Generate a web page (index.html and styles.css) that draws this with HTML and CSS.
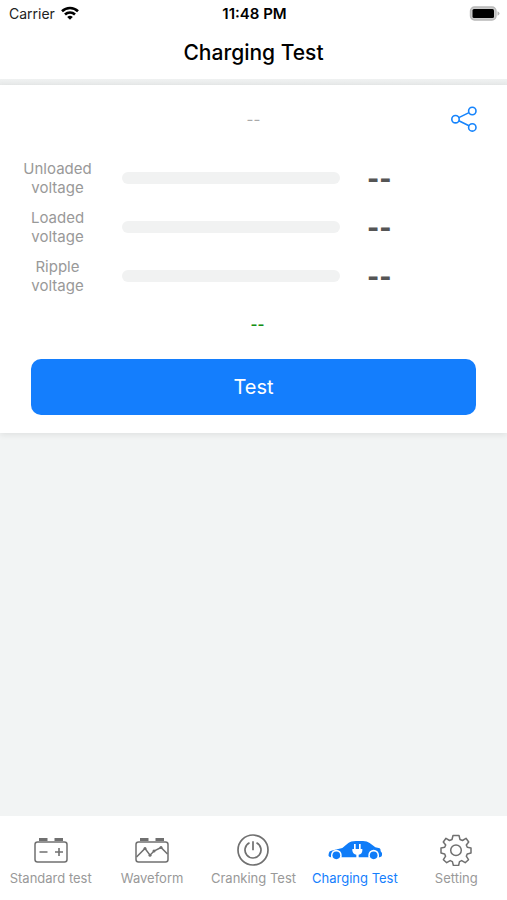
FILE: index.html
```html
<!DOCTYPE html>
<html lang="en">
<head>
<meta charset="utf-8">
<meta name="viewport" content="width=device-width, initial-scale=1">
<title>Charging Test</title>
<link rel="stylesheet" href="styles.css">
</head>
<body>
<div class="status">
  <span class="carrier">Carrier
    <svg width="18" height="14" viewBox="0 0 18 14" fill="none" stroke="#000" stroke-width="2.6" aria-hidden="true"><path d="M1 5.2a11.6 11.6 0 0 1 16 0"/><path d="M4 8.500a7.200 7.200 0 0 1 10 0"/><path d="M9 13.800L6.200 11a4 4 0 0 1 5.600 0z" fill="#000" stroke="none"/></svg>
  </span>
  <span class="time">11:48 PM</span>
  <svg class="battery" width="31" height="15" viewBox="0 0 31 15" aria-hidden="true"><rect x="1.500" y="1" width="25.500" height="13" rx="4" fill="#ccc" stroke="#b8b8b8" stroke-width="1.400"/><rect x="3.500" y="3" width="21.500" height="9" rx="1.500" fill="#000"/><path d="M28.500 5.200q2 .8 2 2.300t-2 2.300z" fill="#b4b4b4"/></svg>
</div>
<header class="title"><h1>Charging Test</h1></header>
<main>
  <section class="card">
    <div class="summary">
      <span class="date">--</span>
      <button class="share" type="button" aria-label="Share">
        <svg width="28" height="28" viewBox="0 0 28 28" fill="none" stroke="#1684fc" stroke-width="1.600"><circle cx="5.500" cy="14.200" r="3.700"/><circle cx="22.300" cy="6" r="3.700"/><circle cx="22.300" cy="22.400" r="3.700"/><path d="M8.800 12.600L19 7.600M8.800 15.800L19 20.800"/></svg>
      </button>
    </div>
    <div class="row"><span class="label">Unloaded<br>voltage</span><span class="bar"></span><span class="value">--</span></div>
    <div class="row"><span class="label">Loaded<br>voltage</span><span class="bar"></span><span class="value">--</span></div>
    <div class="row"><span class="label">Ripple<br>voltage</span><span class="bar"></span><span class="value">--</span></div>
    <p class="result">--</p>
    <button class="test" type="button">Test</button>
  </section>
</main>
<nav class="tabs">
  <a href="#standard">
    <svg width="34" height="26" viewBox="0 0 34 26" fill="none" stroke="#707070" stroke-width="1.500"><rect x="1" y="5" width="32" height="20" rx="2.500"/><path d="M5 2.500h8.500M20.500 2.500h8.500" stroke-width="2.800"/><path d="M5.500 15h8M21 15h8M25 11v8" stroke-width="1.600"/></svg>
    Standard test</a>
  <a href="#waveform">
    <svg width="34" height="26" viewBox="0 0 34 26" fill="none" stroke="#707070" stroke-width="1.500"><rect x="1" y="5" width="32" height="20" rx="2.500"/><path d="M5 2.500h8.500M20.500 2.500h8.500" stroke-width="2.800"/><path d="M1.500 20L10 11.500 15 18.200 19 14 26 10.500 32.500 17"/><g fill="#707070" stroke="none"><circle cx="10" cy="11.500" r="1.500"/><circle cx="15" cy="18.200" r="1.500"/><circle cx="19" cy="14" r="1.500"/><circle cx="26" cy="10.500" r="1.500"/></g></svg>
    Waveform</a>
  <a href="#cranking">
    <svg width="34" height="34" viewBox="0 0 34 34" fill="none" stroke="#707070" stroke-width="1.700"><circle cx="17" cy="17" r="15"/><path d="M13.500 9.800a8 8 0 1 0 7 0M17 8.200v9"/></svg>
    Cranking Test</a>
  <a class="active" href="#charging" aria-current="page">
    <svg width="54" height="20" viewBox="0 0 162 60"><path fill="#0f7cf8" d="M4 50Q0 48 2 42L3 38Q3 34 10 32Q28 27 43 24L61 9Q68 3 84 3H105Q117 3 125 9L142 22L155 25Q158 27 158 34L162 39V46Q162 51 155 52H8Z"/><path d="M9 53V45a16 16 0 0 1 32 0v8zM121 53V45a16 16 0 0 1 32 0v8z" fill="#fff"/><circle cx="25" cy="46" r="11.500" fill="#0f7cf8"/><circle cx="137" cy="46" r="11.500" fill="#0f7cf8"/><path fill="#fff" d="M78 12h5v15h10V12h5v15h5v5q-1 10-11 12v10h-7V44q-10-2-12-12v-5h5z"/></svg>
    Charging Test</a>
  <a href="#setting">
    <svg width="32" height="32" viewBox="0 0 32 32" fill="none" stroke="#707070" stroke-width="1.500" stroke-linejoin="round"><path d="M13 1.500h6l1 4 2.500 1L26 4.300 28.700 8 26.300 11l1 2.300 3.700.7v5l-3.700.9-1 2.300 2.200 3.500-3.300 3-3.500-2.100-2.200 1-.9 3.900h-5.200l-1-3.900-2.200-1-3.500 2.100-3.300-3 2.200-3.500-1-2.300L1 19v-5l3.700-.7 1-2.300L3.300 8 6 4.300l3.500 2.200 2.500-1z"/><circle cx="16" cy="16.200" r="5.300"/></svg>
    Setting</a>
</nav>
</body>
</html>
```
FILE: styles.css
```css
* { box-sizing: border-box; }

body {
  margin: 0;
  min-height: 100vh;
  display: flex;
  flex-direction: column;
  background: #f2f4f4;
  font-family: Inter, "Liberation Sans", sans-serif;
  color: #000;
}

button {
  border: 0;
  padding: 0;
  font: inherit;
  cursor: pointer;
}

svg { display: block; }

.status {
  display: grid;
  grid-template-columns: 1fr auto 1fr;
  align-items: center;
  height: 26px;
  padding: 0 7px 0 9px;
  background: #fff;
  font-size: 14px;
}

.carrier {
  display: flex;
  align-items: center;
  gap: 6px;
  color: #222;
}

.time {
  font-size: 15px;
  font-weight: 600;
}

.battery { justify-self: end; }

.title {
  display: flex;
  align-items: center;
  justify-content: center;
  height: 53px;
  background: #fff;
}

.title h1 {
  margin: 0;
  font-size: 21px;
  font-weight: 500;
}

main {
  flex: 1;
  padding-top: 6px;
  background: linear-gradient(#eff1f1, #e8eaea 6px, #f2f4f4 7px);
}

.card {
  padding-bottom: 18px;
  background: #fff;
  box-shadow: 0 2px 6px rgba(0, 0, 0, 0.08);
}

.summary {
  display: grid;
  grid-template-columns: 1fr auto 1fr;
  align-items: center;
  height: 68px;
  padding: 0 29px;
}

.date {
  grid-column: 2;
  color: #aaa;
  font-size: 15px;
}

.share {
  justify-self: end;
  background: none;
}

.row {
  display: grid;
  grid-template-columns: 115px 1fr 140px;
  align-items: center;
  height: 49px;
}

.label {
  color: #999;
  font-size: 15px;
  line-height: 19px;
  text-align: center;
}

.bar {
  height: 12px;
  margin: 0 27px 0 7px;
  border-radius: 6px;
  background: #f1f2f2;
}

.value {
  padding-top: 2px;
  color: #555;
  font-size: 26px;
  font-weight: 800;
}

.result {
  margin: 0;
  padding: 0 0 10px 8px;
  color: #159015;
  font-size: 15px;
  font-weight: 600;
  line-height: 49px;
  text-align: center;
}

.test {
  display: block;
  width: calc(100% - 62px);
  height: 56px;
  margin: 0 auto;
  border-radius: 10px;
  background: #147efd;
  color: #fff;
  font-size: 20px;
}

.tabs {
  display: grid;
  grid-template-columns: repeat(5, 1fr);
  height: 84px;
  padding-top: 16px;
  background: #fff;
}

.tabs a {
  display: grid;
  grid-template-rows: 36px 20px;
  align-items: center;
  justify-items: center;
  color: #999;
  font-size: 13px;
  text-decoration: none;
  white-space: nowrap;
}

.tabs .active { color: #147efd; }
```
